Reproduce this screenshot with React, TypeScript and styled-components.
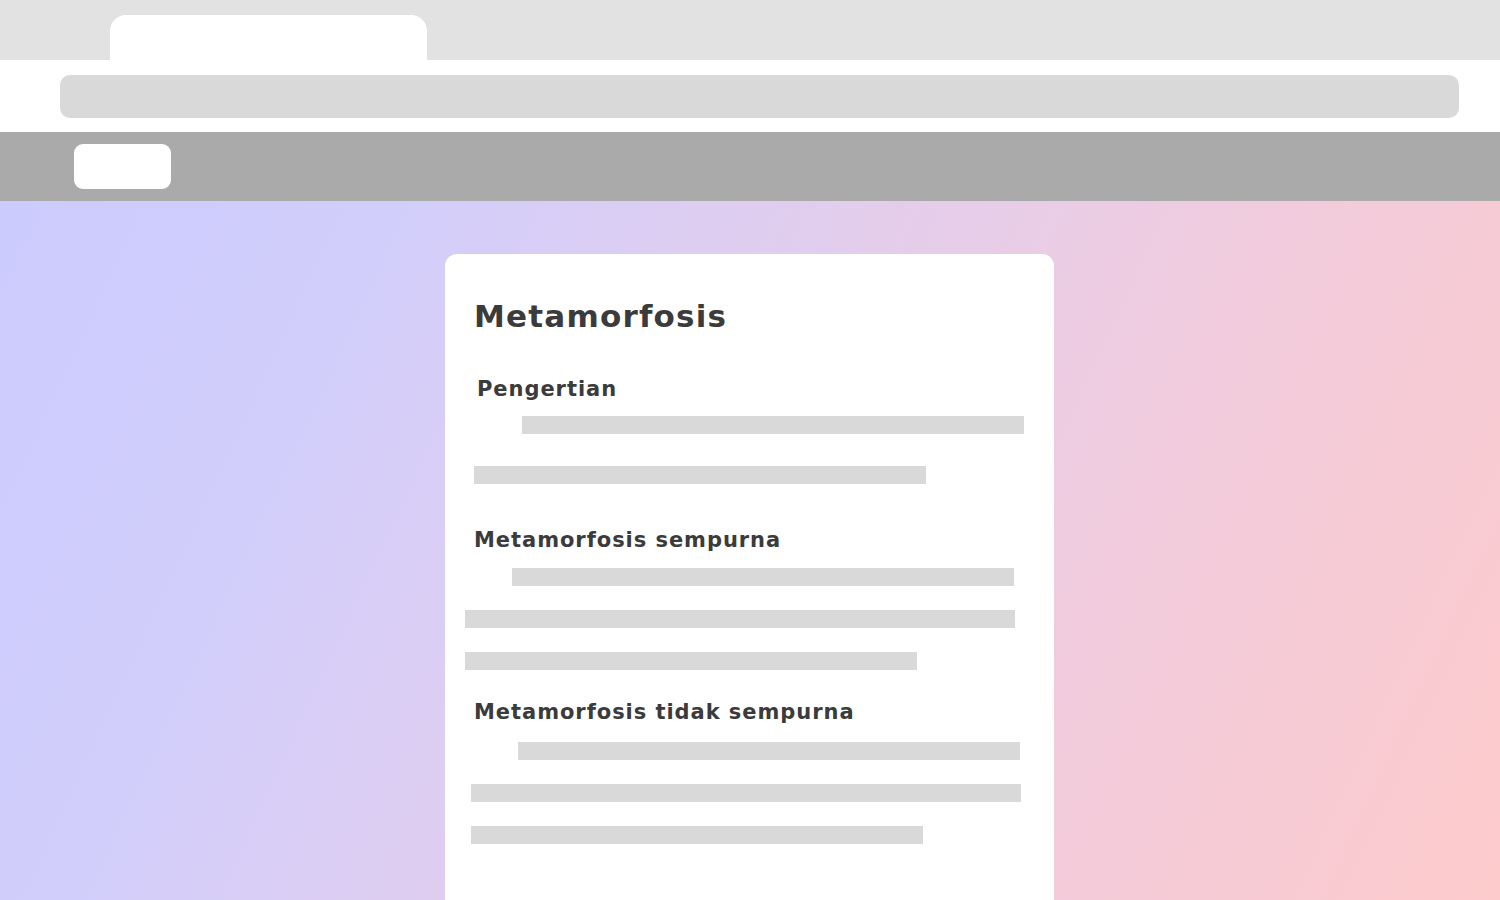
import React from "react";
import styled, { createGlobalStyle } from "styled-components";

const Global = createGlobalStyle`
  html, body { margin: 0; padding: 0; }
  body { font-family: "DejaVu Sans", "Liberation Sans", sans-serif; overflow: hidden; }
`;

const Page = styled.div`
  width: 1500px;
  height: 900px;
  display: flex;
  flex-direction: column;
  overflow: hidden;
`;

const TabStrip = styled.div`
  height: 60px;
  background: #e2e2e2;
  display: flex;
  align-items: flex-end;
  padding-left: 110px;
`;

const Tab = styled.div`
  width: 317px;
  height: 45px;
  background: #ffffff;
  border-radius: 16px 16px 0 0;
`;

const AddressRow = styled.div`
  height: 72px;
  background: #ffffff;
  display: flex;
  align-items: center;
  padding: 0 41px 0 60px;
`;

const AddressBar = styled.div`
  flex: 1;
  height: 43px;
  background: #d9d9d9;
  border-radius: 10px;
`;

const NavBar = styled.div`
  height: 69px;
  background: #aaaaaa;
  display: flex;
  align-items: center;
  padding-left: 74px;
`;

const NavButton = styled.div`
  width: 97px;
  height: 45px;
  background: #ffffff;
  border-radius: 9px;
`;

const Main = styled.div`
  flex: 1;
  background: linear-gradient(115deg, #cbcbfd 0%, #d2cefb 22%, #e3cdec 48%, #f2cbdc 72%, #fdcbcc 100%);
  display: flex;
  justify-content: center;
  padding-top: 53px;
  padding-right: 1px;
`;

const Card = styled.div`
  width: 609px;
  background: #ffffff;
  border-radius: 12px 12px 0 0;
  display: flex;
  flex-direction: column;
  align-items: flex-start;
  padding-top: 46px;
`;

const Title = styled.h1`
  margin: 0 0 0 29px;
  font-size: 31px;
  line-height: 32px;
  font-weight: 700;
  letter-spacing: 1.2px;
  color: #3b3b3b;
`;

const Heading = styled.h2<{ $indent: number; $top: number }>`
  margin: ${(p) => p.$top}px 0 0 ${(p) => p.$indent}px;
  font-size: 21px;
  line-height: 21px;
  font-weight: 700;
  letter-spacing: 0.95px;
  color: #3b3b3b;
`;

const Line = styled.div<{ $indent: number; $width: number; $top: number }>`
  margin: ${(p) => p.$top}px 0 0 ${(p) => p.$indent}px;
  width: ${(p) => p.$width}px;
  height: 18px;
  background: #d9d9d9;
`;

type Bar = { indent: number; width: number; top: number };
type Section = { title: string; indent: number; top: number; bars: Bar[] };

const sections: Section[] = [
  {
    title: "Pengertian",
    indent: 32,
    top: 47,
    bars: [
      { indent: 77, width: 502, top: 16 },
      { indent: 29, width: 452, top: 32 },
    ],
  },
  {
    title: "Metamorfosis sempurna",
    indent: 29,
    top: 46,
    bars: [
      { indent: 67, width: 502, top: 17 },
      { indent: 20, width: 550, top: 24 },
      { indent: 20, width: 452, top: 24 },
    ],
  },
  {
    title: "Metamorfosis tidak sempurna",
    indent: 29,
    top: 32,
    bars: [
      { indent: 73, width: 502, top: 19 },
      { indent: 26, width: 550, top: 24 },
      { indent: 26, width: 452, top: 24 },
    ],
  },
];

export default function App() {
  return (
    <Page>
      <Global />
      <TabStrip>
        <Tab />
      </TabStrip>
      <AddressRow>
        <AddressBar />
      </AddressRow>
      <NavBar>
        <NavButton />
      </NavBar>
      <Main>
        <Card>
          <Title>Metamorfosis</Title>
          {sections.map((s) => (
            <React.Fragment key={s.title}>
              <Heading $indent={s.indent} $top={s.top}>
                {s.title}
              </Heading>
              {s.bars.map((b, i) => (
                <Line key={i} $indent={b.indent} $width={b.width} $top={b.top} />
              ))}
            </React.Fragment>
          ))}
        </Card>
      </Main>
    </Page>
  );
}
